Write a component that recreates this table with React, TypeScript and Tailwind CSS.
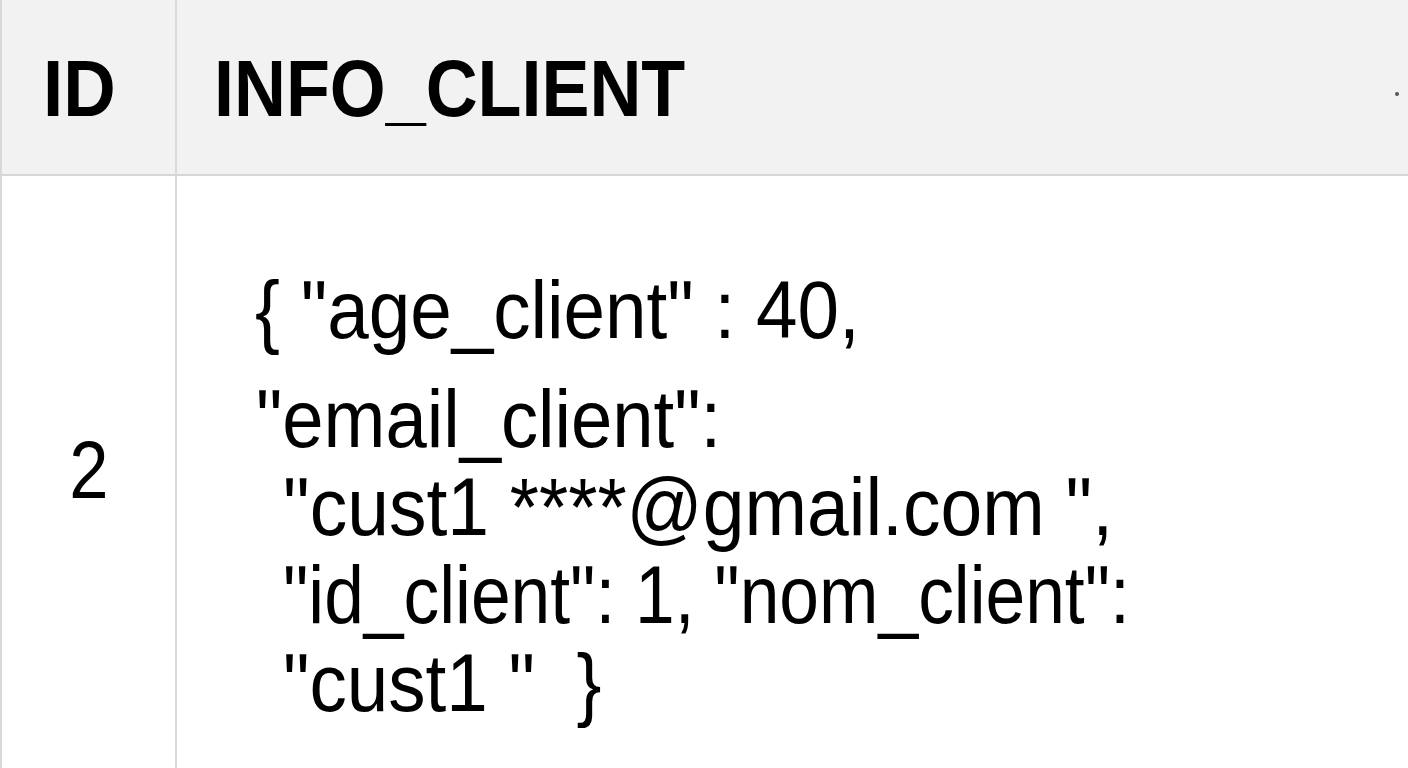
import React from "react";

export default function App() {
  return (
    <div
      className="w-[1408px] h-[768px] overflow-hidden bg-white text-black"
      style={{ fontFamily: '"Liberation Sans", Arial, sans-serif' }}
    >
      {/* Header row */}
      <div className="grid grid-cols-[175px_1fr] h-[176px] bg-[#f2f2f2] border-b-2 border-[#d6d6d6] border-l-2 border-l-[#d9d9d9]">
        <div className="flex items-center border-r-2 border-[#d9d9d9] pl-[41px] pt-[3px]">
          <span className="text-[79px] leading-none font-bold origin-left scale-x-[0.92] inline-block">ID</span>
        </div>
        <div className="flex items-center justify-between pl-[37px] pr-[9px] pt-[3px]">
          <span className="text-[79px] leading-none font-bold origin-left scale-x-[0.91] inline-block whitespace-pre">INFO_CLIENT</span>
          <span className="w-[4px] h-[4px] rounded-full bg-[#555] mt-[10px]"></span>
        </div>
      </div>

      {/* Body row */}
      <div className="grid grid-cols-[175px_1fr] h-[592px] border-l-2 border-[#d9d9d9]">
        <div className="flex items-center justify-center border-r-2 border-[#d9d9d9] pb-[4px]">
          <span className="text-[82px] leading-none inline-block scale-x-[0.86]">2</span>
        </div>
        <div className="flex flex-col pt-[90px] text-[82px] leading-[88px]">
          <div className="pl-[78px] whitespace-pre">
            <span className="inline-block origin-left scale-x-[0.91]">{'{ "age_client" : 40,'}</span>
          </div>
          <div className="pl-[79px] mt-[21px] whitespace-pre">
            <span className="inline-block origin-left scale-x-[0.905]">{'"email_client":'}</span>
          </div>
          <div className="pl-[106px] whitespace-pre">
            <span className="inline-block origin-left scale-x-[0.915]">{'"cust1 ****@gmail.com ",'}</span>
          </div>
          <div className="pl-[106px] whitespace-pre">
            <span className="inline-block origin-left scale-x-[0.87]">{'"id_client": 1, "nom_client":'}</span>
          </div>
          <div className="pl-[106px] whitespace-pre">
            <span className="inline-block origin-left scale-x-[0.91]">{'"cust1 "  }'}</span>
          </div>
        </div>
      </div>
    </div>
  );
}
